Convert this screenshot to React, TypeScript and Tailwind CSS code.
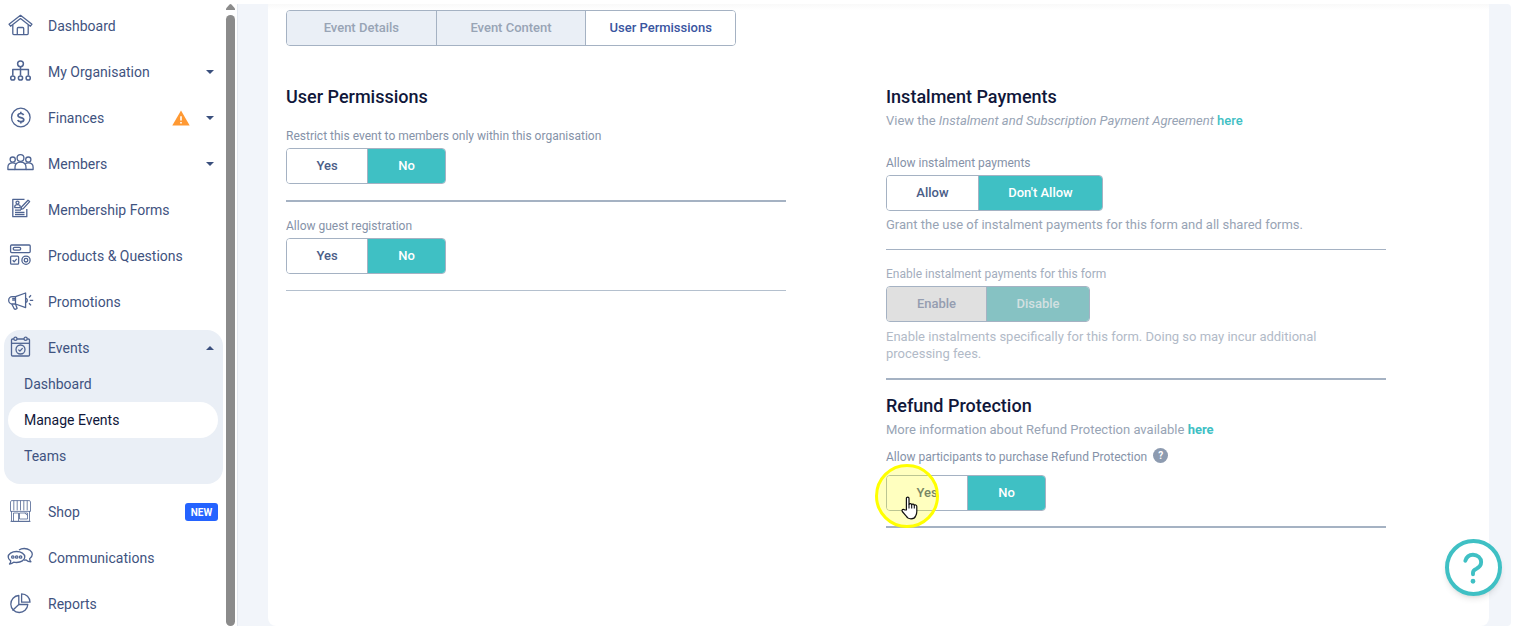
import { useState } from 'react';
import type { ReactNode } from 'react';

interface NavItem {
  label: string;
  icon: ReactNode;
  caret?: boolean;
  warning?: boolean;
  badge?: string;
}

const icons = {
  home: (
    <>
      <path d="M13.5 3.3 25 12.2l-1.6 2-9.9-7.6-9.9 7.6-1.6-2z" />
      <path d="M5.8 13v8.6c0 .6.4 1 1 1h13.4c.6 0 1-.4 1-1V13" />
      <path d="M10.3 22.5v-6c0-.6.4-1 1-1h4.4c.6 0 1 .4 1 1v6" />
    </>
  ),
  organisation: (
    <g strokeWidth="1.5">
      <circle cx="13.5" cy="5.8" r="2.9" />
      <path d="M13.5 9v8.5M5.8 17.5v-6h15.6v6" />
      <circle cx="5.8" cy="20" r="2.1" />
      <circle cx="13.5" cy="20" r="2.1" />
      <circle cx="21.2" cy="20" r="2.1" />
    </g>
  ),
  finances: (
    <>
      <circle cx="13.8" cy="13.5" r="9.3" />
      <path strokeWidth="1.7" d="M16.6 11.1c-.4-1-1.4-1.6-2.8-1.6-1.6 0-2.8.8-2.8 2 0 2.8 5.8 1.4 5.8 4.2 0 1.3-1.3 2-3 2-1.6 0-2.7-.6-3.1-1.7M13.8 7.8v1.7M13.8 17.7v1.8" />
    </>
  ),
  members: (
    <>
      <circle cx="13.5" cy="8" r="3.4" />
      <circle cx="5.7" cy="9.6" r="2.6" />
      <circle cx="21.3" cy="9.6" r="2.6" />
      <path d="M8 19.5v-2.2c0-3.3 2-5.2 5.5-5.2s5.5 1.9 5.5 5.2v2.2z" />
      <path d="M8 19.5H.9v-2.2c0-2.9 1.6-4.4 4.8-4.4 1.2 0 2.2.2 3 .7M19 19.5h7.1v-2.2c0-2.9-1.6-4.4-4.8-4.4-1.2 0-2.2.2-3 .7" />
    </>
  ),
  forms: (
    <>
      <path d="M17.5 3.3H5.8v17.4h14V13" />
      <circle cx="10.5" cy="6.6" r="1.5" />
      <path d="M7.8 11.6v-1c0-1.2.8-1.9 2.7-1.9s2.7.7 2.7 1.9v1z" />
      <path d="m21 4.2 1.6 1.4-6.3 7-2.4.9.6-2.5z" />
      <path d="M8 14.2h6M8 16.4h9.5M8 18.5h9.5" />
    </>
  ),
  products: (
    <>
      <rect x="3.6" y="3" width="19.6" height="7.6" rx="1" />
      <rect x="6.2" y="5.4" width="7.5" height="2.8" rx="1.4" />
      <rect x="3.6" y="14.2" width="8" height="8" rx="1" />
      <path d="m5.7 18.2 1.5 1.6 2.5-3" />
      <circle cx="19" cy="18.2" r="4.1" />
      <circle cx="19" cy="18.2" r="1.8" />
    </>
  ),
  promotions: (
    <>
      <path d="M8.5 8.6 18.6 5v14.6L8.5 16z" />
      <path d="M8.5 8.6H5.2c-2 0-3.5 1.6-3.5 3.6S3.2 16 5.2 16h3.3" />
      <path d="M5.2 12.2h3M5.2 10.5h3M4.8 16l2.4 4.8c.8.8 2.6.4 2.9-.5L8.5 16" />
      <path d="M18.6 10.3c2.2 0 2.2 4 0 4M22 9.5l2-2.2M22.8 12.3h3.4M22 15.2l2 2.2" />
    </>
  ),
  events: (
    <>
      <path d="M6.8 5H5.6c-.7 0-1.1.4-1.1 1.1v14.8c0 .7.4 1.1 1.1 1.1h15.8c.7 0 1.1-.4 1.1-1.1V6.1c0-.7-.4-1.1-1.1-1.1h-1.2M10 5h7" />
      <path d="M4.5 9.3h18" />
      <circle cx="8.4" cy="4.8" r="1.6" />
      <circle cx="18.6" cy="4.8" r="1.6" />
      <circle cx="13.5" cy="15.5" r="4.5" />
      <path d="m11.4 15.6 1.5 1.5 2.7-3" />
    </>
  ),
  shop: (
    <g strokeWidth="0.8">
      <path d="M4.3 2.6h18.4l.8 1.4v9.4h-20V4z" />
      <path d="M6.8 2.6v9.8M10.2 2.6v9.8M13.5 2.6v9.8M16.8 2.6v9.8M20.2 2.6v9.8" />
      <path d="M4.5 13v10.4h18V13M3.5 23.4h20" />
      <path d="M6.5 23v-8h5v8M12.5 15h8v6h-8zM17.8 15l2.6 2.4" />
    </g>
  ),
  communications: (
    <>
      <path d="M9.5 7.5c4.7 0 8.3 2.4 8.3 5.5s-3.6 5.5-8.3 5.5c-1 0-1.900-.1-2.800-.3-1 .9-2.400 1.600-4.200 1.800.9-1 1.200-2 1.200-3.100C2.200 15.900 1.200 14.500 1.200 13c0-3.100 3.600-5.500 8.300-5.500z" />
      <path d="M12 6c1.400-1 3.200-1.500 5.200-1.500 4.500 0 8.100 2.600 8.100 5.800 0 1.800-1 3.300-2.700 4.400.1 1.200.5 2.200 1.300 3.100-2.200 0-3.700-.7-4.800-1.800-.8.200-1.600.2-2.400.2" />
      <circle cx="5.8" cy="13" r="1.200" />
      <circle cx="9.7" cy="13" r="1.200" />
      <circle cx="13.6" cy="13" r="1.200" />
    </>
  ),
  reports: (
    <>
      <path d="M11.800 5.500a8.500 8.500 0 1 0 9 9h-9z" />
      <path d="M11.800 14.500 5.500 20.500" />
      <path d="M14.600 3.800v8.400h8.400a8.400 8.400 0 0 0-8.400-8.400z" />
    </>
  ),
};

const topItems: NavItem[] = [
  { label: 'Dashboard', icon: icons.home },
  { label: 'My Organisation', icon: icons.organisation, caret: true },
  { label: 'Finances', icon: icons.finances, caret: true, warning: true },
  { label: 'Members', icon: icons.members, caret: true },
  { label: 'Membership Forms', icon: icons.forms },
  { label: 'Products & Questions', icon: icons.products },
  { label: 'Promotions', icon: icons.promotions },
];

const bottomItems: NavItem[] = [
  { label: 'Shop', icon: icons.shop, badge: 'NEW' },
  { label: 'Communications', icon: icons.communications },
  { label: 'Reports', icon: icons.reports },
];

const eventPages = ['Dashboard', 'Manage Events', 'Teams'];
const tabs = ['Event Details', 'Event Content', 'User Permissions'];

function NavIcon({ children }: { children: ReactNode }) {
  return (
    <svg className="h-7 w-7 shrink-0" viewBox="0 0 28 28" fill="none" stroke="#4f6492" strokeWidth="1.3" strokeLinejoin="round" aria-hidden="true">
      {children}
    </svg>
  );
}

function Caret({ up }: { up?: boolean }) {
  return (
    <svg className="h-1 w-2 shrink-0" viewBox="0 0 8 4" fill="#3a4f7d" aria-hidden="true">
      <path d={up ? 'M0 4 4 0l4 4z' : 'M0 0h8L4 4z'} />
    </svg>
  );
}

function NavLink({ item }: { item: NavItem }) {
  return (
    <a href="#" className="flex h-9 items-center pr-[5px] pl-[3px]">
      <NavIcon>{item.icon}</NavIcon>
      <span className="ml-[13px] flex-1">{item.label}</span>
      {item.warning && (
        <svg className="mr-4 h-4 w-[18px]" viewBox="0 0 18 16" aria-label="Warning">
          <path d="M9 .5 17.7 15.5H.3z" fill="#ff9933" />
          <path d="M9 6.2v4.3M9 12v1.5" stroke="#fff" strokeWidth="1.6" />
        </svg>
      )}
      {item.caret && <span className="mr-1"><Caret /></span>}
      {item.badge && (
        <span className="flex h-[18px] w-[33px] items-center justify-center rounded-[3px] bg-[#2463ff] text-[10px] font-bold text-white">{item.badge}</span>
      )}
    </a>
  );
}

interface ToggleProps {
  label: string;
  options: [string, string];
  widths?: [string, string];
  disabled?: boolean;
}

function Toggle({ label, options, widths = ['w-[81px]', 'w-[77px]'], disabled }: ToggleProps) {
  const [selected, setSelected] = useState(options[1]);

  return (
    <div role="group" aria-label={label} className="flex h-9 w-fit overflow-hidden rounded border border-[#a5b2c3] text-[13px] font-medium">
      {options.map((option, i) => {
        const active = option === selected;
        const color = disabled
          ? active ? 'bg-[#86c2c3] text-[#d3e0e1]' : 'bg-[#e0e0e0] text-[#959db0]'
          : active ? 'bg-[#3fc0c4] text-white' : 'bg-white text-[#4a5d87]';
        return (
          <button
            key={option}
            type="button"
            disabled={disabled}
            aria-pressed={active}
            onClick={() => setSelected(option)}
            className={`${widths[i]} ${color} ${i === 0 ? 'border-r border-[#a5b2c3]' : ''}`}
          >
            {option}
          </button>
        );
      })}
    </div>
  );
}

function Label({ children }: { children: ReactNode }) {
  return <div className="mt-[15px] mb-[3px] text-[12px] leading-[18px] text-[#8592a8]">{children}</div>;
}

function HelpText({ children }: { children: ReactNode }) {
  return <p className="max-w-[480px] text-[13px] leading-[17px] text-[#98a4b5]">{children}</p>;
}

function Heading({ children }: { children: ReactNode }) {
  return <h2 className="text-[18px] leading-6 font-medium text-[#10173a]">{children}</h2>;
}

function Pointer() {
  return (
    <div className="pointer-events-none absolute -top-[11px] -left-[11px] flex h-16 w-16 items-center justify-center rounded-full border-[3px] border-[#ffff00] bg-[#ffff00]/25">
      <svg className="mt-6 ml-1.5 h-6 w-[18px]" viewBox="0 0 18 24" aria-hidden="true">
        <path
          d="M5.4 14V2.3c0-1.7 2.6-1.7 2.6 0v6.2c.3-1.2 2.5-1.2 2.7.3.5-1 2.4-.8 2.6.6.6-.9 2.5-.6 2.5 1v5.2c0 2.4-.7 3.3-1.2 4.4-.6 1.9-1.7 2.8-4.6 2.8-2.7 0-4-1-5-3L1.3 15.5c-.9-1.6.9-2.9 2.2-1.7z"
          fill="#fff"
          stroke="#111"
          strokeWidth="1.2"
          strokeLinejoin="round"
        />
        <path d="M8 8.5v4M10.7 9v3.5M13.3 9.6v3" stroke="#111" strokeWidth="1.1" />
      </svg>
    </div>
  );
}

export default function App() {
  const [page, setPage] = useState('Manage Events');
  const [tab, setTab] = useState('User Permissions');

  return (
    <div className="flex min-h-screen bg-white py-1 pr-1 font-[Roboto,sans-serif]">
      <aside className="flex w-[238px] shrink-0 border-r border-[#e3e8f0]">
        <nav className="flex flex-1 flex-col gap-2.5 px-1 pt-1 pr-[3px] text-[14px] text-[#3f5380]">
          {topItems.map(item => <NavLink key={item.label} item={item} />)}

          <div className="rounded-2xl bg-[#eaeff6] pb-2.5">
            <a href="#" className="flex h-9 items-center pr-[9px] pl-[3px]">
              <NavIcon>{icons.events}</NavIcon>
              <span className="ml-[13px] flex-1">Events</span>
              <Caret up />
            </a>
            {eventPages.map(name => (
              <a
                key={name}
                href="#"
                onClick={() => setPage(name)}
                className={`mr-[5px] ml-1 flex h-9 items-center rounded-full px-4 ${page === name ? 'bg-white text-[#10173a]' : ''}`}
              >
                {name}
              </a>
            ))}
          </div>

          {bottomItems.map(item => <NavLink key={item.label} item={item} />)}
        </nav>
        <div className="mr-0.5 flex w-[9px] flex-col items-center gap-[5px]">
          <svg className="h-1.5 w-[9px] shrink-0" viewBox="0 0 9 6" fill="#8b8b8b" aria-hidden="true">
            <path d="M3.5.5Q4.5-.3 5.5.5L9 4.5V6H0V4.5z" />
          </svg>
          <div className="w-full flex-1 rounded-full bg-[#8b8b8b]" />
        </div>
      </aside>

      <main className="flex flex-1 rounded-r bg-[#f2f5fa] pr-[22px] pl-[30px]">
        <div className="flex-1 rounded-b-lg bg-white bg-linear-to-b from-[#f9f9f9] to-white to-[6px] px-[18px] pt-1.5">
          <div role="tablist" className="flex h-9 w-[450px] overflow-hidden rounded border border-[#a5b2c3] text-[13px] font-medium">
            {tabs.map((name, i) => (
              <button
                key={name}
                type="button"
                role="tab"
                aria-selected={tab === name}
                onClick={() => setTab(name)}
                className={`flex-1 ${i > 0 ? 'border-l border-[#a5b2c3]' : ''} ${tab === name ? 'bg-white text-[#3a559f]' : 'bg-[#eaeff6] text-[#98a4b5]'}`}
              >
                {name}
              </button>
            ))}
          </div>

          <div className="mt-[39px] grid max-w-[1100px] grid-cols-2 gap-[100px]">
            <section>
              <Heading>User Permissions</Heading>
              <div className="pt-[3px]">
                <Label>Restrict this event to members only within this organisation</Label>
                <Toggle label="Restrict this event to members only" options={['Yes', 'No']} />
              </div>
              <hr className="mt-4 border-t-2 border-[#a5b2c3]" />
              <Label>Allow guest registration</Label>
              <Toggle label="Allow guest registration" options={['Yes', 'No']} />
              <hr className="mt-4 border-[#b4c0ce]" />
            </section>

            <section>
              <Heading>Instalment Payments</Heading>
              <div className="pt-[3px] pb-2.5">
                <HelpText>
                  View the <em>Instalment and Subscription Payment Agreement</em>{' '}
                  <a href="#" className="font-medium text-[#3fc0c4]">here</a>
                </HelpText>
              </div>
              <Label>Allow instalment payments</Label>
              <Toggle label="Allow instalment payments" options={['Allow', "Don't Allow"]} widths={['w-[92px]', 'w-[123px]']} />
              <div className="pt-[5px]">
                <HelpText>Grant the use of instalment payments for this form and all shared forms.</HelpText>
              </div>
              <hr className="mt-4 border-[#a5b2c3]" />

              <div className="opacity-75">
                <Label>Enable instalment payments for this form</Label>
              </div>
              <Toggle label="Enable instalment payments for this form" options={['Enable', 'Disable']} widths={['w-[100px]', 'w-[102px]']} disabled />
              <div className="pt-1.5 opacity-75">
                <HelpText>Enable instalments specifically for this form. Doing so may incur additional processing fees.</HelpText>
              </div>
              <hr className="mt-4 mb-3.5 border-t-2 border-[#a5b2c3]" />

              <Heading>Refund Protection</Heading>
              <div className="pt-[3px]">
                <HelpText>
                  More information about Refund Protection available{' '}
                  <a href="#" className="font-bold text-[#3fc0c4]">here</a>
                </HelpText>
              </div>
              <div className="mt-2.5 mb-[9px] flex text-[12px] leading-[18px] text-[#8592a8]">
                Allow participants to purchase Refund Protection
                <button type="button" aria-label="About refund protection" className="ml-1.5 flex h-[15px] w-[15px] items-center justify-center rounded-full bg-[#8d9bb0] text-[10px] font-bold text-white">
                  ?
                </button>
              </div>
              <div className="relative">
                <Toggle label="Allow participants to purchase Refund Protection" options={['Yes', 'No']} />
                <Pointer />
              </div>
              <hr className="mt-[15px] border-t-2 border-[#a5b2c3]" />
            </section>
          </div>
        </div>
      </main>

      <button type="button" aria-label="Help" className="fixed right-[13px] bottom-[34px] h-[57px] w-[57px] rounded-full border-4 border-[#3fc0c4] bg-white shadow-md">
        <svg className="h-full w-full" viewBox="0 0 48 48" fill="none" stroke="#3fc0c4" strokeWidth="3.8" strokeLinecap="round" aria-hidden="true">
          <path d="M16 17.500c1-3.800 3.800-6 7.500-6 4.600 0 8 3.100 8 7.200 0 3.600-2.400 5.500-5 6.700-2.100.9-3 1.900-3 3.700v1.600" />
          <path d="M23.500 37.300v.2" strokeWidth="4.600" />
        </svg>
      </button>
    </div>
  );
}
